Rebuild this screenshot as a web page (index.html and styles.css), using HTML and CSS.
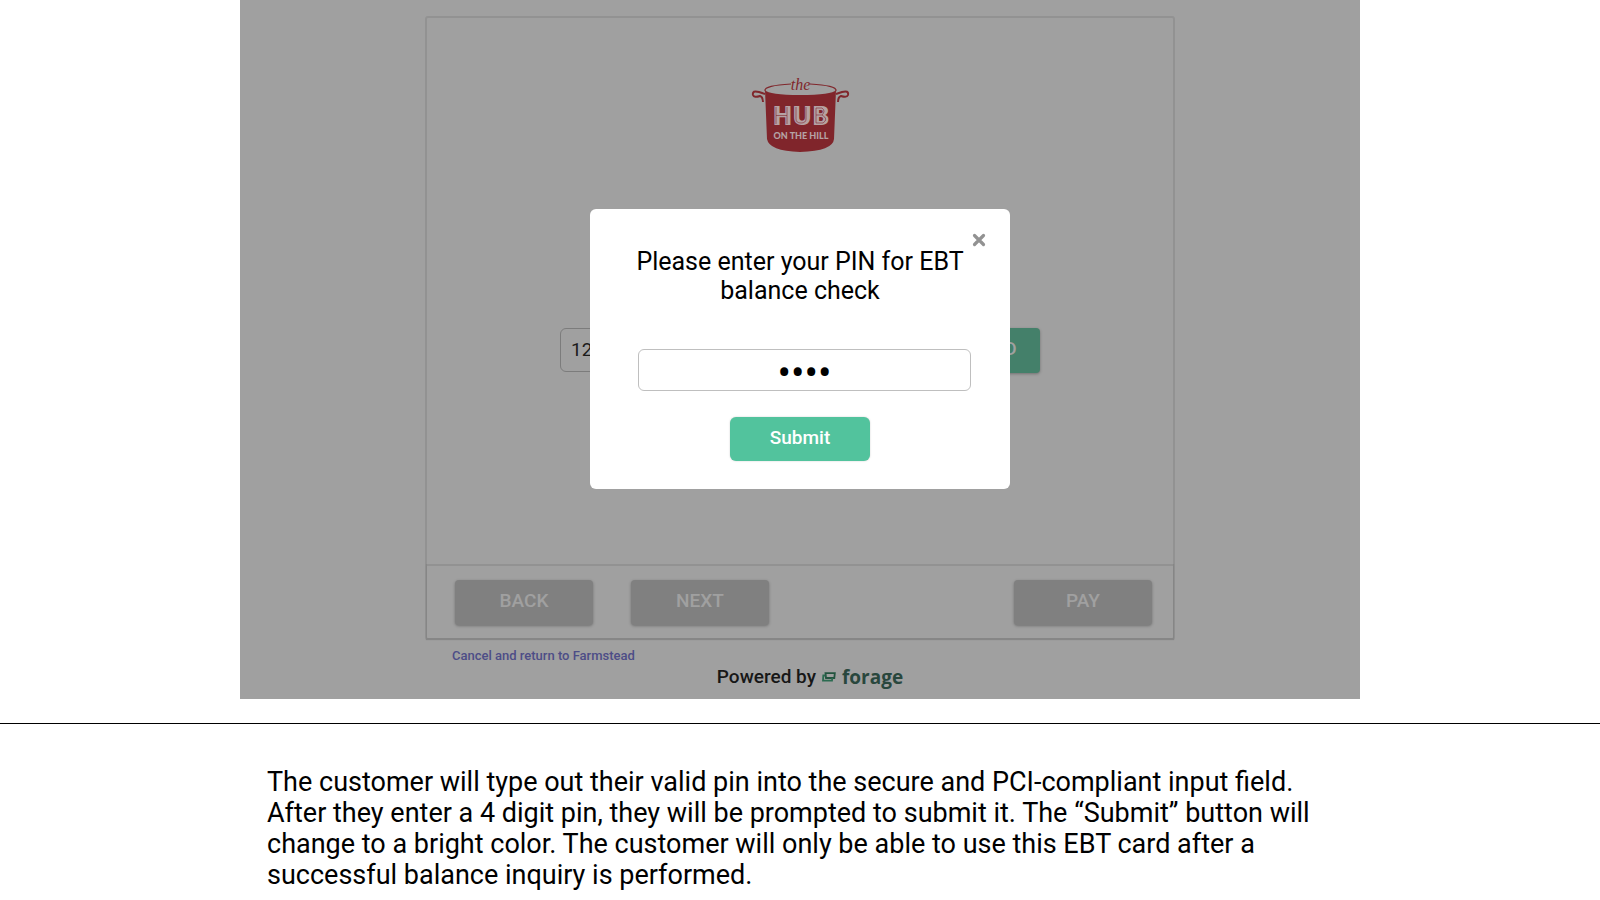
FILE: index.html
```html
<!DOCTYPE html>
<html lang="en">
  <head>
    <meta charset="utf-8" />
    <title>EBT balance check</title>
    <link rel="stylesheet" href="styles.css">
  </head>
  <body>
    <main class="screen">
      <section class="card">
        <div class="card-body">
          <svg class="logo" width="120" height="100" viewBox="0 0 120 100" role="img" aria-label="The Hub on the Hill">
            <g fill="none" stroke="#80272c">
              <path d="M25 26 C24 22 34 20 51 19 M70 19 C87 20 97 22 96 26" stroke-width="1.200" />
              <path d="M25 29 L19 27 Q12 25 13 30 Q14 33 20 31 Q23 32 23 37" stroke-width="2" />
              <path d="M96 29 L102 27 Q109 25 108 30 Q107 33 101 31 Q98 32 98 37" stroke-width="2" />
            </g>
            <path d="M25 25 Q29 30 60 30 Q92 30 96 25 L94 74 Q93 86 60 87 Q29 86 27 74 Z" fill="#80252b" />
            <text class="logo-the" x="60.500" y="25" text-anchor="middle">the</text>
            <text class="logo-hub" x="61" y="60" text-anchor="middle">HUB</text>
            <path d="M36 42 V59 M47 42 V59 M36 50.500 H47 M56 42 V54 Q56 58 61 58 Q66 58 66 54 V42 M76 43 V58 M76 43 H82 Q86 46 82 50 H76 M82 50 Q89 54 83 58 H76" fill="none" stroke="#80252b" stroke-width="0.600" />
            <text class="logo-hill" x="61" y="74" text-anchor="middle">ON THE HILL</text>
          </svg>
          <div class="card-entry">
            <input class="card-number" type="text" value="1234" aria-label="EBT card number" />
            <button class="btn btn-add" type="button">ADD CARD</button>
          </div>
        </div>
        <div class="card-footer">
          <button class="btn" type="button">BACK</button>
          <button class="btn" type="button">NEXT</button>
          <button class="btn btn-pay" type="button">PAY</button>
        </div>
      </section>
      <a class="cancel" href="#">Cancel and return to Farmstead</a>
      <div class="powered">
        <span>Powered by</span>
        <svg width="14" height="10" viewBox="0 0 14 10" aria-hidden="true">
          <path d="M3.500 1.200 H12.800 L12.300 6 H4 Z" fill="none" stroke="#23543f" stroke-width="1.800" />
          <path d="M3.500 3.500 H1.300 L1 8.600 H10 L10.300 6" fill="none" stroke="#2b6b50" stroke-width="1.800" />
        </svg>
        <span class="brand">forage</span>
      </div>

      <div class="overlay">
        <form class="modal" role="dialog" aria-labelledby="pin-label">
          <button class="close" type="button" aria-label="Close">
            <svg width="14" height="14" viewBox="0 0 14 14">
              <path d="M2.500 2.500 L11.500 11.500 M11.500 2.500 L2.500 11.500" stroke="#929292" stroke-width="3.200" stroke-linecap="round" />
            </svg>
          </button>
          <label class="modal-title" id="pin-label" for="pin">Please enter your PIN for EBT balance check</label>
          <input class="pin" id="pin" type="password" value="1234" maxlength="4" />
          <button class="submit" type="button">Submit</button>
        </form>
      </div>
    </main>

    <hr class="rule" />
    <p class="caption">
      The customer will type out their valid pin into the secure and PCI-compliant input field. After they enter a 4 digit pin, they will be prompted to submit it. The “Submit” button will change to a bright color. The customer will only be able to use this EBT card after a successful balance inquiry is performed.
    </p>
  </body>
</html>
```

FILE: styles.css
```css
* {
  box-sizing: border-box;
}

body {
  margin: 0;
  background-color: #fff;
  color: #000;
  font-family: Roboto, "Liberation Sans", sans-serif;
}

button,
input {
  font-family: inherit;
}

.screen {
  position: relative;
  width: 70%;
  margin: 0 auto;
  padding: 16px 185px 9px;
  background-color: #a0a0a0;
}

.card {
  border: 2px solid #929292;
  border-radius: 3px;
}

.card-body {
  display: flex;
  flex-direction: column;
  align-items: center;
  padding: 47px 0 191px;
}

.logo {
  margin-bottom: 163px;
}

.logo-the {
  font: italic 16px "Liberation Serif", serif;
  fill: #80272c;
}

.logo-hub {
  font: 800 26px "Open Sans", sans-serif;
  fill: #b5a2a4;
}

.logo-hill {
  font: 900 9px Lato, sans-serif;
  fill: #b5a2a4;
}

.card-entry {
  display: flex;
  justify-content: space-between;
  width: 480px;
}

.card-number {
  width: 320px;
  height: 44px;
  padding: 0 10px 2px;
  border: 1px solid #7c7c7c;
  border-radius: 6px;
  background-color: transparent;
  color: #1b1b1b;
  font-size: 19px;
}

.card-footer {
  display: flex;
  gap: 38px;
  padding: 14px 21px 13px 28px;
  border-top: 2px solid #929292;
  box-shadow: 0 1px 1px 1px #868686;
  clip-path: inset(0 -3px -3px);
}

.btn {
  width: 138px;
  height: 45px;
  padding: 0 0 4px;
  border: 0;
  border-radius: 4px;
  background-color: #808080;
  box-shadow: 0 1px 3px rgba(0, 0, 0, 0.3);
  color: #a0a0a0;
  font-size: 19px;
  font-weight: 500;
}

.btn-add {
  background-color: #44806a;
}

.btn-pay {
  margin-left: auto;
}

.cancel {
  display: block;
  width: fit-content;
  margin: 8px 27px 0;
  color: #4d4d87;
  font-size: 13px;
  font-weight: 500;
  line-height: 16px;
  text-decoration: none;
}

.powered {
  display: flex;
  align-items: center;
  justify-content: center;
  gap: 6px;
  padding-left: 20px;
  color: #171717;
  font-size: 19px;
  font-weight: 500;
  line-height: 26px;
}

.brand {
  color: #29473d;
  font-family: "Open Sans", sans-serif;
  font-weight: 700;
}

.overlay {
  position: absolute;
  inset: 0;
  display: flex;
  align-items: center;
  justify-content: center;
  padding-bottom: 2px;
}

.modal {
  position: relative;
  display: flex;
  flex-direction: column;
  align-items: center;
  width: 420px;
  padding: 38px 39px 28px;
  border-radius: 6px;
  background-color: #fff;
}

.close {
  position: absolute;
  top: 24px;
  right: 24px;
  display: flex;
  padding: 0;
  border: 0;
  background: none;
}

.modal-title {
  margin-bottom: 44px;
  font-size: 25px;
  line-height: 29px;
  text-align: center;
}

.pin {
  align-self: flex-end;
  width: 333px;
  height: 42px;
  margin-bottom: 26px;
  padding: 8px 0 0;
  border: 1px solid #bfbfbf;
  border-radius: 6px;
  background-color: #fff;
  font-size: 40px;
  text-align: center;
}

.submit {
  width: 140px;
  height: 44px;
  padding: 0 0 2px;
  border: 0;
  border-radius: 6px;
  background-color: #52c39d;
  box-shadow: 0 0 2px rgba(0, 0, 0, 0.2);
  color: #fff;
  font-size: 19px;
  font-weight: 500;
}

.rule {
  margin: 24px 0 0;
  border: 0;
  border-top: 1px solid #000;
}

.caption {
  margin: 0;
  padding: 43px 267px 0;
  font-size: 27px;
  line-height: 31px;
}
```
